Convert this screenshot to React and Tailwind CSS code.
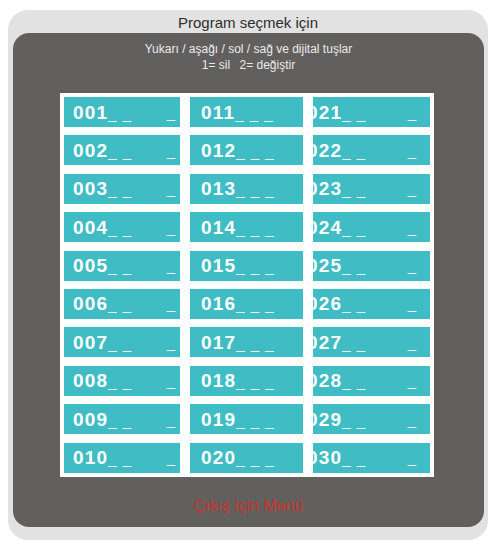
import React from "react";

const rows = Array.from({ length: 10 }, (_, i) => i + 1);
const pad = (n) => String(n).padStart(3, "0");

function Cell({ num, col }) {
  if (col === 1) {
    return (
      <div className="h-[30px] bg-[#3fbcc4] overflow-hidden flex items-center justify-between pl-[9px] pr-[5px] text-white">
        <span className="font-bold text-[19px] leading-none tracking-[1.2px]">
          {num}
          <span className="font-normal text-[15px] tracking-[1px] text-[#e8f7f8]">_ _</span>
        </span>
        <span className="font-normal text-[15px] leading-none text-[#e8f7f8]">_</span>
      </div>
    );
  }
  if (col === 2) {
    return (
      <div className="h-[30px] bg-[#3fbcc4] overflow-hidden flex items-center pl-[11px] text-white">
        <span className="font-bold text-[19px] leading-none tracking-[1.2px]">
          {num}
          <span className="font-normal text-[15px] tracking-[1px] text-[#e8f7f8]">_ _ _</span>
        </span>
      </div>
    );
  }
  return (
    <div className="h-[30px] bg-[#3fbcc4] overflow-hidden flex items-center justify-between pr-[14px] text-white">
      <span className="font-bold text-[19px] leading-none tracking-[1.2px] ml-[-6px]">
        {num}
        <span className="font-normal text-[15px] tracking-[1px] text-[#e8f7f8]">_ _</span>
      </span>
      <span className="font-normal text-[15px] leading-none text-[#e8f7f8]">_</span>
    </div>
  );
}

export default function App() {
  return (
    <div
      className="w-[496px] h-[546px] bg-white pt-[10px] px-[8px] pb-[6px]"
      style={{ fontFamily: '"Liberation Sans", Arial, sans-serif' }}
    >
      <div className="h-full bg-[#e2e2e2] rounded-[20px] flex flex-col pb-[13px]">
        <div className="h-[23px] pt-[3px] flex items-center justify-center text-[15px] text-[#2e2e2e]">
          Program seçmek için
        </div>
        <div className="flex-1 ml-[5px] mr-[4px] bg-[#625f5f] rounded-[16px] flex flex-col">
          <div className="pt-[8px] h-[60px] text-center text-[12px] leading-[16px] text-[#ececec]">
            <div>Yukarı / aşağı / sol / sağ ve dijital tuşlar</div>
            <div>
              1= sil <span className="ml-[6px]">2= değiştir</span>
            </div>
          </div>
          <div className="ml-[47px] w-[374px] bg-white p-[4px]">
            <div className="grid grid-cols-[116px_113px_117px] grid-rows-[repeat(10,30px)] grid-flow-col gap-y-[8.4px] justify-between">
              {rows.map((r) => (
                <Cell key={"a" + r} num={pad(r)} col={1} />
              ))}
              {rows.map((r) => (
                <Cell key={"b" + r} num={pad(r + 10)} col={2} />
              ))}
              {rows.map((r) => (
                <Cell key={"c" + r} num={pad(r + 20)} col={3} />
              ))}
            </div>
          </div>
          <div className="mt-[20px] text-center text-[16px] leading-[18px] text-[#c8342c]">
            Çıkış için Menü
          </div>
        </div>
      </div>
    </div>
  );
}
